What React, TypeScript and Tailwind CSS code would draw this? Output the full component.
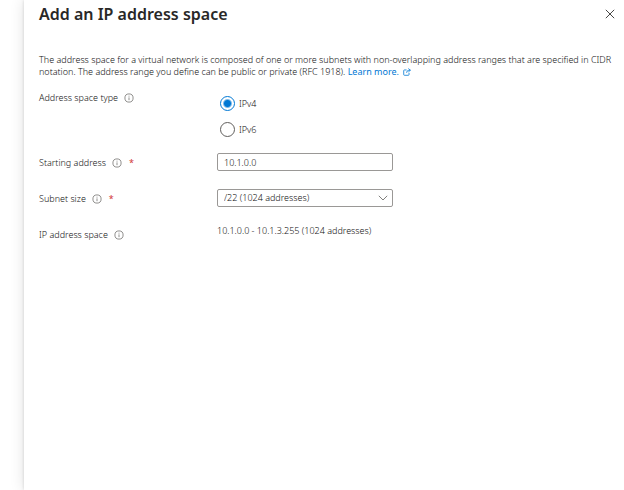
import { useState, type ReactNode } from "react";

function InfoIcon() {
  return (
    <svg viewBox="0 0 10 10" className="size-[10px] shrink-0" fill="none" stroke="#605e5c" aria-hidden="true">
      <circle cx="5" cy="5" r="4.1" strokeWidth="0.7" />
      <path d="M5 4.4v2.8M5 2.7v0.9" strokeWidth="0.7" />
    </svg>
  );
}

function ExternalIcon() {
  return (
    <svg viewBox="0 0 9 9" className="size-2" fill="none" stroke="currentColor" strokeWidth="0.9" aria-hidden="true">
      <path d="M4 2.2H1.6Q0.8 2.2 0.8 3V7.4Q0.8 8.2 1.6 8.2H6Q6.8 8.2 6.8 7.4V5.4M6 0.6L8.4 2.5L6 4.4M8.2 2.5H6.6Q4.4 2.5 4 5.4" />
    </svg>
  );
}

function Star() {
  return <span className="ml-[7px] font-normal text-[#d13438]" aria-hidden="true">*</span>;
}

function Label({ htmlFor, required, children }: { htmlFor: string; required?: boolean; children: ReactNode }) {
  return (
    <label htmlFor={htmlFor} className="flex h-5 items-center">
      <span className="mr-[6px]">{children}</span>
      <InfoIcon />
      {required && <Star />}
    </label>
  );
}

const row = "grid grid-cols-[178px_minmax(0,1fr)] items-start";
const radio =
  "size-[15px] shrink-0 appearance-none rounded-full border border-[#605e5c] bg-white checked:border-[#0078d4] checked:bg-[radial-gradient(circle,#0078d4_3px,transparent_5px)]";

export default function App() {
  const [version, setVersion] = useState("4");
  const [start, setStart] = useState("10.1.0.0");

  return (
    <div className="min-h-screen bg-white pl-6 font-['Noto_Sans','Open_Sans',sans-serif] text-[9px] leading-3 font-light text-[#111111]">
      <main className="min-h-screen bg-white pr-2 pl-[15px] shadow-[0_0_14px_rgba(0,0,0,0.12),0_0_3px_rgba(0,0,0,0.14)]">
        <header className="flex h-7 items-center justify-between">
          <h1 className="text-[16px] leading-7 font-semibold text-[#292827]">Add an IP address space</h1>
          <button type="button" aria-label="Close" className="flex size-3 items-center justify-center">
            <svg viewBox="0 0 10 10" className="size-[10px]" fill="none" stroke="#323130" strokeWidth="0.9" aria-hidden="true">
              <path d="M0.8 0.8L9.2 9.2M9.2 0.8L0.8 9.2" />
            </svg>
          </button>
        </header>

        <p className="mt-[26px]">
          The address space for a virtual network is composed of one or more subnets with non-overlapping address ranges that are specified in CIDR notation. The address range you define can be public or private (RFC 1918).{" "}
          <a href="#learn-more" className="inline-flex items-center gap-1 align-bottom font-normal text-[#0078d4]">
            Learn more.
            <ExternalIcon />
          </a>
        </p>

        <form className="mt-[10px]">
          <fieldset className={row} aria-labelledby="type-label">
            <span id="type-label" className="flex h-5 items-center">
              <span className="mr-[6px]">Address space type</span>
              <InfoIcon />
            </span>
            <div className="flex flex-col gap-[11px] pt-2 pl-[3px]">
              <label className="flex h-[15px] items-center gap-1">
                <input type="radio" name="version" className={radio} checked={version === "4"} onChange={() => setVersion("4")} />
                IPv4
              </label>
              <label className="flex h-[15px] items-center gap-1">
                <input type="radio" name="version" className={radio} checked={version === "6"} onChange={() => setVersion("6")} />
                IPv6
              </label>
            </div>
          </fieldset>

          <div className={`${row} mt-4`}>
            <Label htmlFor="start" required>Starting address</Label>
            <input
              id="start"
              value={start}
              onChange={(e) => setStart(e.target.value)}
              className="h-[18px] w-full max-w-[176px] rounded-xs border border-[#9a9896] px-[6px]"
            />
          </div>

          <div className={`${row} mt-4`}>
            <Label htmlFor="size" required>Subnet size</Label>
            <div className="relative w-full max-w-[176px]">
              <select id="size" className="block h-[18px] w-full appearance-none rounded-xs border border-[#9a9896] bg-white px-[6px]">
                <option>/22 (1024 addresses)</option>
              </select>
              <svg viewBox="0 0 10 6" className="pointer-events-none absolute top-[6px] right-[5px] h-[6px] w-[10px]" fill="none" stroke="#605e5c" strokeWidth="0.8" aria-hidden="true">
                <path d="M0.8 0.8L5 5L9.2 0.8" />
              </svg>
            </div>
          </div>

          <div className={`${row} mt-4`}>
            <Label htmlFor="space">IP address space</Label>
            <output id="space" className="block">10.1.0.0 - 10.1.3.255 (1024 addresses)</output>
          </div>
        </form>
      </main>
    </div>
  );
}
